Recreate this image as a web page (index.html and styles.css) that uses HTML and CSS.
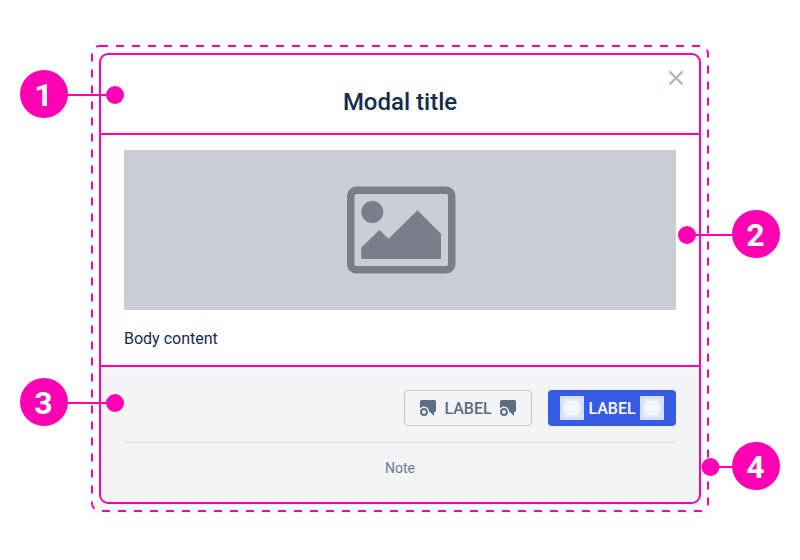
FILE: index.html
```html
<!DOCTYPE html>
<html lang="en">
<head>
<meta charset="utf-8">
<title>Modal anatomy</title>
<link rel="stylesheet" href="styles.css">
</head>
<body>
<main class="stage">
  <div class="frame">
    <section class="modal">
      <header class="modal-header">
        <svg class="close" viewBox="0 0 16 16"><path d="M1.5 1.5l13 13M14.5 1.5l-13 13"/></svg>
        <h1 class="title">Modal title</h1>
      </header>
      <div class="modal-body">
        <div class="media">
          <svg class="picture" viewBox="0 0 109 88">
            <rect class="picture-frame" x="3.75" y="4.25" width="101" height="79.500" rx="5.5"/>
            <circle cx="25.3" cy="26" r="11"/>
            <path d="M14.3 73V61.5L32.5 44l9 8.800L70.500 24.300 94 48v25z"/>
          </svg>
        </div>
        <p class="body-text">Body content</p>
      </div>
      <footer class="modal-footer">
        <div class="actions">
          <button class="button secondary">
            <svg class="glyph" viewBox="0 0 16 16"><use href="#swap"/></svg>
            <span class="label">LABEL</span>
            <svg class="glyph" viewBox="0 0 16 16"><use href="#swap"/></svg>
          </button>
          <button class="button primary">
            <svg class="slot" viewBox="0 0 24 24"><use href="#slot"/></svg>
            <span class="label">LABEL</span>
            <svg class="slot" viewBox="0 0 24 24"><use href="#slot"/></svg>
          </button>
        </div>
        <p class="note">Note</p>
      </footer>
    </section>
  </div>

  <svg class="annotations" viewBox="0 0 800 560">
    <defs>
      <g id="swap">
        <path d="M1.500 0h13A1.500 1.500 0 0 1 16 1.500v9a1.500 1.500 0 0 1-1.500 1.500H14v4l-4-4H9.200A5.200 5.200 0 0 0 0 8.500v-7A1.500 1.500 0 0 1 1.500 0z"/>
        <circle class="ring" cx="4" cy="12" r="2.900"/>
      </g>
      <g id="slot">
        <path fill="#d7defa" d="M0 0h24v24H0z"/>
        <rect x="3" y="3" width="18" height="18" rx="1.500" fill="#e9edfd"/>
        <rect x="5" y="5" width="14" height="14" rx="1" fill="#fbfcff"/>
        <g fill="none" stroke="#e3e8fc" stroke-width=".6">
          <rect x="6.500" y="6.500" width="11" height="11" rx="1"/>
          <circle cx="12" cy="12" r="4"/>
          <path d="M4 4l16 16M20 4L4 20"/>
        </g>
        <g fill="#c6cff8">
          <circle cx="4.500" cy="4.500" r="1"/><circle cx="19.500" cy="4.500" r="1"/>
          <circle cx="4.500" cy="19.500" r="1"/><circle cx="19.500" cy="19.500" r="1"/>
        </g>
      </g>
    </defs>
    <g class="outline">
      <rect class="dashed" x="92" y="46" width="616" height="465" rx="8"/>
      <rect x="100" y="54" width="600" height="449" rx="8"/>
      <path d="M100 134h600M100 366h600"/>
      <path d="M60 95h55M687 235h53M60 403h55M710 467h30"/>
    </g>
    <g class="marks">
      <circle cx="115" cy="95" r="9"/><circle cx="44" cy="94" r="24"/>
      <circle cx="687" cy="235" r="9"/><circle cx="756" cy="234" r="24"/>
      <circle cx="115" cy="403" r="9"/><circle cx="44" cy="402" r="24"/>
      <circle cx="710.500" cy="467" r="9"/><circle cx="756" cy="466" r="24"/>
    </g>
    <g class="numbers">
      <text x="43.500" y="106">1</text>
      <text x="755.500" y="246">2</text>
      <text x="43.500" y="414">3</text>
      <text x="755.500" y="478">4</text>
    </g>
  </svg>
</main>
</body>
</html>
```
FILE: styles.css
```css
* { box-sizing: border-box; }

body {
  margin: 0;
  background: #fff;
  font-family: Roboto, "Liberation Sans", sans-serif;
  color: #172b4d;
}

.stage {
  position: relative;
  width: 800px;
  height: 560px;
  padding: 46px 92px 49px;
}

.frame {
  height: 465px;
  padding: 8px;
  border-radius: 8px;
  background: #fff;
  box-shadow: 0 4px 16px rgba(0, 0, 0, 0.025);
}

.modal {
  display: flex;
  flex-direction: column;
  height: 449px;
  border-radius: 8px;
  overflow: hidden;
}

.modal-header {
  display: flex;
  flex-direction: column;
  height: 80px;
  padding: 16px;
}

.close {
  align-self: flex-end;
  width: 16px;
  height: 16px;
  fill: none;
  stroke: #b0b8c5;
  stroke-width: 2.4;
}

.title {
  margin: 0;
  font-size: 24px;
  font-weight: 500;
  line-height: 32px;
  text-align: center;
}

.modal-body {
  height: 232px;
  padding: 16px 24px;
}

.media {
  display: flex;
  justify-content: center;
  align-items: center;
  height: 160px;
  background: #cacdd6;
}

.picture {
  width: 109px;
  height: 88px;
  margin-left: 2px;
  fill: #7a7e8b;
}

.picture-frame {
  fill: none;
  stroke: #7a7e8b;
  stroke-width: 7.5;
}

.body-text {
  margin: 17px 0 0;
  font-size: 16px;
  line-height: 24px;
}

.modal-footer {
  flex: 1;
  padding: 24px;
  background: #f3f4f6;
}

.actions {
  display: flex;
  justify-content: flex-end;
  gap: 16px;
  height: 53px;
  border-bottom: 1px solid #dddfe3;
}

.button {
  display: flex;
  align-items: center;
  justify-content: center;
  width: 128px;
  height: 36px;
  padding: 0;
  border: 0;
  border-radius: 4px;
  font: 500 16px/24px Roboto, "Liberation Sans", sans-serif;
}

.secondary {
  gap: 8px;
  border: 1px solid #bec5d0;
  background: transparent;
  color: #5e6c84;
}

.primary {
  gap: 4px;
  background: #365be5;
  color: #fff;
}

.label { padding-top: 2px; }

.glyph {
  width: 16px;
  height: 16px;
  fill: #5e6c84;
}

.ring {
  fill: none;
  stroke: #5e6c84;
  stroke-width: 2;
}

.slot {
  width: 24px;
  height: 24px;
}

.note {
  margin: 15px 0 0;
  font-size: 14px;
  line-height: 20px;
  text-align: center;
  color: #6b7a96;
}

.annotations {
  position: absolute;
  inset: 0;
  width: 800px;
  height: 560px;
}

.outline {
  fill: none;
  stroke: #ff00b2;
  stroke-width: 2;
}

.dashed { stroke-dasharray: 8 8; }

.marks { fill: #ff00b2; }

.numbers {
  fill: #fff;
  font-size: 32px;
  font-weight: 700;
  text-anchor: middle;
}
```
